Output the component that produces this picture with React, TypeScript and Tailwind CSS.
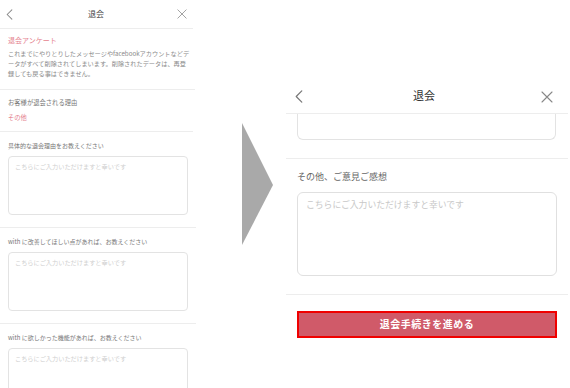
const font = "font-['Noto_Sans_CJK_JP','Noto_Sans',sans-serif]";

const Chevron = ({ className }: { className: string }) => (
  <svg viewBox="0 0 8 14" fill="none" className={className}>
    <path d="M7 1 L1 7 L7 13" stroke="currentColor" strokeWidth="1.3" strokeLinecap="round" strokeLinejoin="round" />
  </svg>
);

const Cross = ({ className }: { className: string }) => (
  <svg viewBox="0 0 12 12" fill="none" className={className}>
    <path d="M1 1 L11 11 M11 1 L1 11" stroke="currentColor" strokeWidth="1.1" strokeLinecap="round" />
  </svg>
);

const placeholder = 'こちらにご入力いただけますと幸いです';

const SmallQuestion = ({ label }: { label: string }) => (
  <div className="px-[8px] pt-[9px] pb-[12px] border-b border-[#ededed]">
    <p className="text-[6px] leading-[10px] text-[#777]">{label}</p>
    <textarea
      placeholder={placeholder}
      className="mt-[5px] block w-full h-[59px] resize-none rounded-[4px] border border-[#e3e3e3] px-[6px] py-[5px] text-[6.2px] leading-[10px] placeholder:text-[#cfcfcf] outline-none"
    />
  </div>
);

const LeftScreen = () => (
  <div className="w-[196px] h-[388px] shrink-0 overflow-hidden bg-white">
    <div className="h-[29px] mr-[3px] border-b border-[#ededed] flex items-center justify-between px-[6px]">
      <Chevron className="w-[7px] h-[11px] text-[#8a8a8a]" />
      <span className="text-[8px] leading-none text-[#444] ml-[2px]">退会</span>
      <Cross className="w-[10px] h-[10px] text-[#9a9a9a]" />
    </div>
    <div className="pl-[8px] pr-[3px] pt-[6px] pb-[10px] mr-[1px] border-b border-[#ededed]">
      <p className="text-[7px] leading-[10px] text-[#e5838f]">退会アンケート</p>
      <p className="mt-[4px] w-[182px] text-[6.2px] leading-[10px] text-[#8a8a8a] break-all [line-break:anywhere]">
        これまでにやりとりしたメッセージやfacebookアカウントなどデータがすべて削除されてしまいます。削除されたデータは、再登録しても戻る事はできません。
      </p>
    </div>
    <div className="px-[8px] pt-[8px] pb-[8px] mr-[3px] border-b border-[#ededed]">
      <p className="text-[6.3px] leading-[10px] text-[#777]">お客様が退会される理由</p>
      <p className="mt-[5px] text-[6.3px] leading-[10px] text-[#e5838f]">その他</p>
    </div>
    <SmallQuestion label="具体的な退会理由をお教えください" />
    <SmallQuestion label="with に改善してほしい点があれば、お教えください" />
    <SmallQuestion label="with に欲しかった機能があれば、お教えください" />
  </div>
);

const Arrow = () => (
  <div className="w-[90px] shrink-0 pt-[123px] pl-[46px]">
    <svg viewBox="0 0 31 122" className="w-[31px] h-[122px]">
      <polygon points="0,0 31,62 0,122" fill="#a9a9a9" />
    </svg>
  </div>
);

const RightScreen = () => (
  <div className="flex-1 pt-[80px]">
    <div className="h-full bg-white">
      <div className="h-[34px] border-b border-[#ededed] flex items-center justify-between pl-[9px] pr-[15px] mr-[2px]">
        <Chevron className="w-[8px] h-[13px] text-[#777]" />
        <span className="text-[11px] leading-none text-[#333] ml-[4px] -mt-[2px]">退会</span>
        <Cross className="w-[12px] h-[12px] text-[#888]" />
      </div>
      <div className="px-[11px] pr-[12px] pb-[18px] border-b border-[#ededed] mr-[2px]">
        <div className="h-[26px] rounded-b-[6px] border border-t-0 border-[#e3e3e3]" />
      </div>
      <div className="pl-[11px] pr-[11px] pt-[11px] pb-[18px] border-b border-[#ededed] mr-[2px]">
        <p className="text-[9px] leading-[14px] text-[#666]">その他、ご意見ご感想</p>
        <textarea
          placeholder={placeholder}
          className="mt-[8px] block w-full h-[84px] resize-none rounded-[6px] border border-[#e0e0e0] px-[8px] py-[5px] text-[8.8px] leading-[14px] placeholder:text-[#c8c8c8] outline-none"
        />
      </div>
      <div className="pl-[11px] pr-[13px] pt-[14px]">
        <button className="w-full h-[27px] border-[2px] border-[#f00000] bg-[#d05a69] text-white text-[10px] font-bold leading-none tracking-[0.5px]">
          退会手続きを進める
        </button>
      </div>
    </div>
  </div>
);

export default function App() {
  return (
    <div className={`w-[570px] h-[388px] flex bg-white overflow-hidden ${font}`}>
      <LeftScreen />
      <Arrow />
      <RightScreen />
    </div>
  );
}
